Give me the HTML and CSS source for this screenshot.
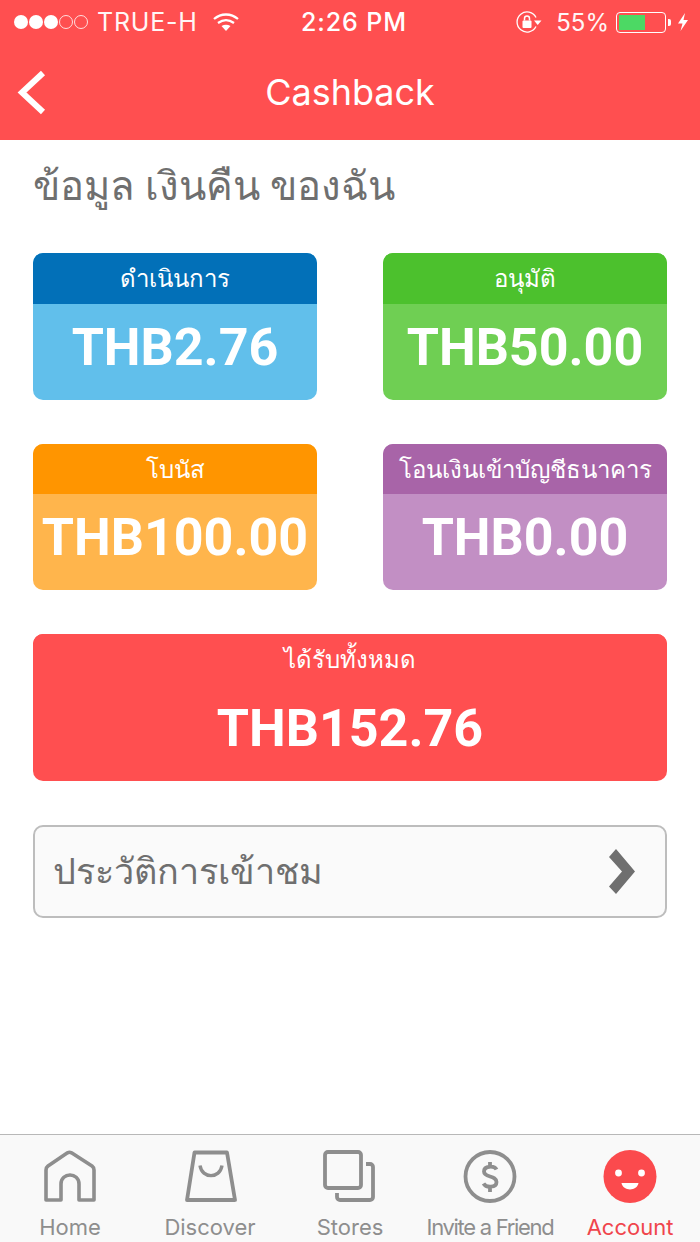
FILE: index.html
```html
<!DOCTYPE html>
<html lang="th">
<head>
<meta charset="utf-8">
<title>Cashback</title>
<link rel="stylesheet" href="styles.css">
</head>
<body>
<div class="app">
  <header class="top">
    <div class="status">
      <div class="status-left">
        <span class="dots"><i class="dot"></i><i class="dot"></i><i class="dot"></i><i class="dot off"></i><i class="dot off"></i></span>
        <span class="carrier">TRUE-H</span>
        <svg class="wifi" width="26" height="20" viewBox="0 0 26 20"><path d="M1 7C8 1 18 1 25 7M5 11C10 7.500 16 7.500 21 11" fill="none" stroke="#fff" stroke-width="2.300"/><path d="M8.500 14C11.500 12.300 14.500 12.300 17.500 14L13 19Z" fill="#fff"/></svg>
      </div>
      <div class="clock">2:26 PM</div>
      <div class="status-right">
        <svg class="lock" width="26" height="22" viewBox="0 0 26 22"><path d="M20 15.500A10 10 0 1 1 20 6.500" fill="none" stroke="#fff" stroke-width="1.300"/><path d="M18 9.500H25.500L21.700 14Z" fill="#fff"/><rect x="6.500" y="9.500" width="9" height="7.500" rx="1" fill="#fff"/><path d="M8.500 9.500V7.500a2.500 2.500 0 0 1 5 0V9.500" fill="none" stroke="#fff" stroke-width="1.500"/></svg>
        <span class="pct">55%</span>
        <span class="battery"><span class="battery-fill"></span></span>
        <i class="battery-tip"></i>
        <svg class="bolt" width="12" height="20" viewBox="0 0 12 20"><path d="M8 1 1 11.500H5.500L3.500 19 11 8H6.500Z" fill="#fff"/></svg>
      </div>
    </div>
    <div class="nav">
      <svg class="back" width="32" height="48" viewBox="0 0 32 48"><path d="M27 5 6 24.500 27 44" fill="none" stroke="#fff" stroke-width="6"/></svg>
      <h1 class="nav-title">Cashback</h1>
    </div>
  </header>

  <main class="content">
    <h2 class="heading">ข้อมูล เงินคืน ของฉัน</h2>
    <div class="cards">
      <section class="card blue"><div class="card-head">ดำเนินการ</div><div class="card-value">THB2.76</div></section>
      <section class="card green"><div class="card-head">อนุมัติ</div><div class="card-value">THB50.00</div></section>
      <section class="card orange"><div class="card-head">โบนัส</div><div class="card-value">THB100.00</div></section>
      <section class="card purple"><div class="card-head">โอนเงินเข้าบัญชีธนาคาร</div><div class="card-value">THB0.00</div></section>
      <section class="card red wide"><div class="card-head">ได้รับทั้งหมด</div><div class="card-value">THB152.76</div></section>
    </div>
    <div class="history">
      <span class="history-label">ประวัติการเข้าชม</span>
      <svg class="chevron" width="26" height="45" viewBox="0 0 26 45"><path d="M7 0 26 22.500 7 45 0 37.500 13 22.500 0 8Z" fill="#6f6f6f"/></svg>
    </div>
  </main>

  <nav class="tabs">
    <div class="tab">
      <svg class="tab-icon" width="54" height="54" viewBox="0 0 54 54"><path d="M3 20Q3 17.500 5 16L24.500 2.800Q26.500 1.800 28.500 2.800L49 16Q51 17.500 51 20V50H36V34C36 22 18 22 18 34V50H3Z" fill="none" stroke="#8e8e8e" stroke-width="3.600" stroke-linejoin="round"/></svg>
      <span class="tab-label">Home</span>
    </div>
    <div class="tab">
      <svg class="tab-icon" width="54" height="54" viewBox="0 0 54 54"><path d="M11.500 2.500H44L52 50H4Z" fill="none" stroke="#8e8e8e" stroke-width="3.800" stroke-linejoin="round"/><path d="M17 15.500C19 29 37 29 39 15.500" fill="none" stroke="#8e8e8e" stroke-width="3.400"/></svg>
      <span class="tab-label">Discover</span>
    </div>
    <div class="tab">
      <svg class="tab-icon" width="54" height="54" viewBox="0 0 54 54"><rect x="2" y="2" width="36" height="36" rx="3" fill="none" stroke="#8e8e8e" stroke-width="3.800"/><path d="M43 14H47A3 3 0 0 1 50 17V47A3 3 0 0 1 47 50H17A3 3 0 0 1 14 47V43" fill="none" stroke="#8e8e8e" stroke-width="3.800"/></svg>
      <span class="tab-label">Stores</span>
    </div>
    <div class="tab">
      <svg class="tab-icon" width="54" height="54" viewBox="0 0 54 54"><circle cx="27" cy="26.500" r="24.500" fill="none" stroke="#8e8e8e" stroke-width="3.800"/><path d="M33.500 19.500C31.500 15.500 21 15.500 21 21.500C21 28 33.500 25 33.500 32C33.500 38 23 38 20.500 33.500M27 12V16M27 37.500V42" fill="none" stroke="#8e8e8e" stroke-width="3.800"/></svg>
      <span class="tab-label tight">Invite a Friend</span>
    </div>
    <div class="tab active">
      <svg class="tab-icon" width="54" height="54" viewBox="0 0 54 54"><circle cx="27" cy="26.500" r="26.500" fill="#fb4a4d"/><circle cx="15.500" cy="23" r="3.400" fill="#fff"/><circle cx="38.500" cy="23" r="3.400" fill="#fff"/><path d="M18.500 33H35.500C34 41.500 20 41.500 18.500 33Z" fill="#fff"/></svg>
      <span class="tab-label">Account</span>
    </div>
  </nav>
</div>
</body>
</html>
```
FILE: styles.css
```css
* { box-sizing: border-box; }
html, body { margin: 0; padding: 0; background: #fff; }
body { font-family: Roboto, "Noto Sans", sans-serif; }
.app { width: 700px; height: 1242px; display: flex; flex-direction: column; overflow: hidden; }

.top { height: 140px; background: #ff4f50; color: #fff; flex: none; font-family: Inter, Roboto, sans-serif; }
.status { height: 44px; padding: 0 11px 0 14px; display: grid; grid-template-columns: 1fr auto 1fr; align-items: center; }
.status-left, .status-right { display: flex; align-items: center; }
.status-right { justify-content: flex-end; }
.dots { display: flex; gap: 1px; }
.dot { width: 14px; height: 14px; border-radius: 50%; background: #fff; display: block; }
.dot.off { background: transparent; border: 1px solid rgba(255,255,255,.8); }
.carrier { font-size: 25px; margin-left: 9px; letter-spacing: .8px; opacity: .95; }
.wifi { margin-left: 15px; }
.clock { font-size: 25px; font-weight: 500; letter-spacing: .9px; padding-left: 5px; }
.pct { font-size: 24px; margin-left: 14px; opacity: .95; }
.battery { width: 50px; height: 21px; margin-left: 7px; border: 1px solid #fff; border-radius: 4px; padding: 2px; display: block; }
.battery-fill { display: block; width: 26px; height: 100%; background: #4cd964; }
.battery-tip { width: 3px; height: 7px; margin-left: 2px; background: #fff; display: block; border-radius: 0 2px 2px 0; }
.bolt { margin-left: 6px; }
.nav { height: 96px; position: relative; display: flex; align-items: center; justify-content: center; }
.back { position: absolute; left: 16px; top: 24px; }
.nav-title { margin: 0; font-size: 36px; font-weight: 400; }

.content { flex: 1; padding: 0 33px; }
.heading { margin: 0; height: 113px; padding-top: 22px; font-size: 40px; line-height: 50px; font-weight: 500; color: #6f6f6f; white-space: nowrap; }
.cards { display: grid; grid-template-columns: 284px 284px; justify-content: space-between; row-gap: 44px; }
.card { height: 146.500px; border-radius: 10px; overflow: hidden; color: #fff; text-align: center; }
.card-head { height: 50.500px; font-size: 24px; line-height: 53px; white-space: nowrap; }
.card-value { height: 96px; line-height: 88px; font-size: 52px; font-weight: 700; }
.wide { grid-column: 1 / -1; }
.blue { background: #61bfeb; } .blue .card-head { background: #0270b8; }
.green { background: #6fcf53; } .green .card-head { background: #4cc12d; }
.orange { background: #ffb54c; } .orange .card-head { background: #ff9500; }
.purple { background: #c28fc4; } .purple .card-head { background: #a864a8; }
.red { background: #ff4f50; } .red .card-head { background: #ff4f50; }

.history { height: 93.500px; margin-top: 44px; padding: 0 30px 0 18px; background: #fafafa; border: 2px solid #bdbdbd; border-radius: 10px; display: flex; align-items: center; justify-content: space-between; }
.history-label { font-size: 36px; color: #6f6f6f; font-weight: 500; white-space: nowrap; }

.tabs { height: 108px; flex: none; display: grid; grid-template-columns: repeat(5, 140px); background: #f9f9f9; border-top: 1px solid #b8b8b8; font-family: Inter, Roboto, sans-serif; }
.tab { display: flex; flex-direction: column; align-items: center; padding-top: 15px; }
.tab-icon { display: block; }
.tab-label { font-size: 22px; line-height: 28px; margin-top: 9px; color: #8e8e8e; white-space: nowrap; }
.tab-label.tight { letter-spacing: -1.300px; }
.active .tab-label { color: #f0454c; }
```
